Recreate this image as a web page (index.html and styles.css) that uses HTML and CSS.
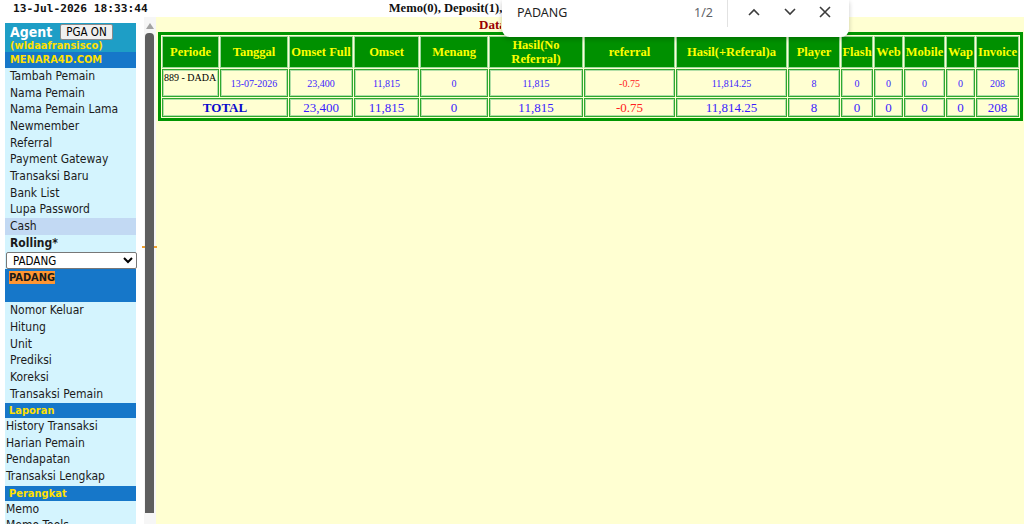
FILE: index.html
```html
<!DOCTYPE html>
<html lang="en">
<head>
    <meta charset="UTF-8">
    <meta name="viewport" content="width=device-width, initial-scale=1.0">
    <title>Agent - Rolling</title>
    <link rel="stylesheet" href="styles.css">
</head>
<body>
    <div class="topbar">
        <span class="clock">13-Jul-2026 18:33:44</span>
        <span class="memo">Memo(0), Deposit(1), Withdraw(0)</span>
    </div>

    <div class="frames">
        <div class="left-frame">
            <div class="menu">
                <div class="agent">
                    <div class="agent-row">
                        <span class="agent-title">Agent</span>
                        <button class="pga">PGA ON</button>
                    </div>
                    <div class="agent-user">(wldaafransisco)</div>
                </div>
                <div class="section site">MENARA4D.COM</div>
                <a class="item">Tambah Pemain</a>
                <a class="item">Nama Pemain</a>
                <a class="item">Nama Pemain Lama</a>
                <a class="item">Newmember</a>
                <a class="item">Referral</a>
                <a class="item">Payment Gateway</a>
                <a class="item">Transaksi Baru</a>
                <a class="item">Bank List</a>
                <a class="item">Lupa Password</a>
                <a class="item active">Cash</a>
                <div class="item bold">Rolling*</div>
                <select class="market">
                    <option>PADANG</option>
                </select>
                <div class="picked"><span class="match">PADANG</span></div>
                <a class="item">Nomor Keluar</a>
                <a class="item">Hitung</a>
                <a class="item">Unit</a>
                <a class="item">Prediksi</a>
                <a class="item">Koreksi</a>
                <a class="item">Transaksi Pemain</a>
                <div class="section">Laporan</div>
                <a class="item plain">History Transaksi</a>
                <a class="item plain">Harian Pemain</a>
                <a class="item plain">Pendapatan</a>
                <a class="item plain">Transaksi Lengkap</a>
                <div class="section">Perangkat</div>
                <a class="item plain">Memo</a>
                <a class="item plain">Memo Tools</a>
            </div>
            <div class="scrollbar">
                <div class="arrow"></div>
                <div class="tick"></div>
                <div class="thumb"></div>
            </div>
        </div>

        <div class="right-frame">
            <div class="caption"><span class="caption-text">Data Rolling PADANG</span></div>
            <table class="report">
                <colgroup>
                    <col class="w57"><col class="w68"><col class="w64"><col class="w65"><col class="w68">
                    <col class="w94"><col class="w91"><col class="w111"><col class="w52"><col class="w32">
                    <col class="w29"><col class="w41"><col class="w29"><col class="w43">
                </colgroup>
                <tr class="head">
                    <th>Periode</th>
                    <th>Tanggal</th>
                    <th>Omset Full</th>
                    <th>Omset</th>
                    <th>Menang</th>
                    <th>Hasil(No<br>Referral)</th>
                    <th>referral</th>
                    <th>Hasil(+Referal)a</th>
                    <th>Player</th>
                    <th>Flash</th>
                    <th>Web</th>
                    <th>Mobile</th>
                    <th>Wap</th>
                    <th>Invoice</th>
                </tr>
                <tr class="data">
                    <td class="periode">889 - DADA</td>
                    <td>13-07-2026</td>
                    <td>23,400</td>
                    <td>11,815</td>
                    <td>0</td>
                    <td>11,815</td>
                    <td class="neg">-0.75</td>
                    <td>11,814.25</td>
                    <td>8</td>
                    <td>0</td>
                    <td>0</td>
                    <td>0</td>
                    <td>0</td>
                    <td>208</td>
                </tr>
                <tr class="total">
                    <td colspan="2" class="total-label">TOTAL</td>
                    <td>23,400</td>
                    <td>11,815</td>
                    <td>0</td>
                    <td>11,815</td>
                    <td class="neg">-0.75</td>
                    <td>11,814.25</td>
                    <td>8</td>
                    <td>0</td>
                    <td>0</td>
                    <td>0</td>
                    <td>0</td>
                    <td>208</td>
                </tr>
            </table>
        </div>
    </div>

    <div class="findbar">
        <div class="find-row">
            <span class="query">PADANG</span>
            <span class="count">1/2</span>
            <span class="divider"></span>
            <svg class="ico up" width="12" height="8" viewBox="0 0 12 8"><polyline points="1,7 6,2 11,7" fill="none" stroke="#3c3c3c" stroke-width="1.6"/></svg>
            <svg class="ico down" width="12" height="8" viewBox="0 0 12 8"><polyline points="1,1 6,6 11,1" fill="none" stroke="#3c3c3c" stroke-width="1.6"/></svg>
            <svg class="ico close" width="12" height="12" viewBox="0 0 12 12"><path d="M1 1 L11 11 M11 1 L1 11" stroke="#3c3c3c" stroke-width="1.6"/></svg>
        </div>
    </div>
</body>
</html>
```

FILE: styles.css
```css
body {
    margin: 0;
    width: 1024px;
    height: 524px;
    overflow: hidden;
    position: relative;
    background: #fff;
    font-family: "DejaVu Sans", Verdana, sans-serif;
}
.topbar {
    height: 17px;
    display: flex;
    align-items: center;
    white-space: nowrap;
    overflow: hidden;
}
.clock {
    margin-left: 13px;
    font: bold 11.2px "DejaVu Sans Mono", monospace;
    color: #111;
}
/* the rest of this line sits under the find bar */
.memo {
    margin-left: 241px;
    width: 113px;
    overflow: hidden;
    font: bold 12.6px "Liberation Serif", serif;
    color: #111;
}
.frames {
    display: flex;
    height: 507px;
    overflow: hidden;
}
.left-frame {
    width: 156px;
    flex-shrink: 0;
    display: flex;
    background: #fff;
}
.menu {
    width: 131px;
    margin: 6px 8px 0 5px;
    background: #d4f4fe;
    font-size: 12px;
    font-stretch: condensed;
}
.agent {
    background: #1e9ec6;
    height: 29px;
}
.agent-row {
    height: 17px;
    display: flex;
    align-items: center;
}
.agent-title {
    margin-left: 5px;
    width: 50px;
    font-weight: bold;
    font-size: 14px;
    color: #fff;
}
.pga {
    width: 53px;
    height: 16px;
    margin-top: 1px;
    padding: 0;
    font: 11.5px "DejaVu Sans", sans-serif;
    font-stretch: condensed;
    color: #000;
    background: #f0f0f0;
    border: 1px solid #8a8a8a;
    border-radius: 2px;
}
.agent-user {
    height: 12px;
    line-height: 12px;
    padding-left: 5px;
    font-size: 11px;
    font-weight: bold;
    color: #ffe000;
}
.section {
    height: 16px;
    line-height: 16px;
    padding-left: 4px;
    background: #1677c9;
    color: #ffe000;
    font-size: 11px;
    font-weight: bold;
    border-top: 1px solid #d4f4fe;
    box-sizing: border-box;
}
.section.site {
    border-top: none;
    padding-left: 5px;
}
.item {
    display: block;
    height: 16.67px;
    line-height: 16.67px;
    padding-left: 5px;
    color: #1b1b1b;
    white-space: nowrap;
}
.item.plain {
    padding-left: 1px;
}
.item.active {
    background: #c2d9f3;
}
.item.bold {
    font-weight: bold;
}
.market {
    display: block;
    width: 131px;
    height: 17px;
    margin: 1px 0 0 1px;
    padding: 0 2px;
    font: 11.5px "DejaVu Sans", sans-serif;
    font-stretch: condensed;
    color: #000;
    background: #fff;
    border: 1px solid #777;
    border-radius: 2px;
}
.picked {
    height: 33px;
    padding: 1px 0 0 4px;
    box-sizing: border-box;
    background: #1677c9;
}
.match {
    background: #ff9632;
    color: #1a1a1a;
    font-size: 11px;
    font-weight: bold;
}
.scrollbar {
    width: 12px;
    position: relative;
    background: #f6f6f6;
}
.arrow {
    width: 0;
    height: 0;
    margin: 6px auto 0;
    border-left: 4px solid transparent;
    border-right: 4px solid transparent;
    border-bottom: 6px solid #a3a3a3;
}
.tick {
    position: absolute;
    left: -2px;
    top: 229px;
    width: 15px;
    height: 2px;
    background: #f0a030;
}
.thumb {
    position: relative;
    width: 9px;
    height: 480px;
    margin: 4px 0 0 1px;
    background: #5e5e5e;
    border-radius: 4px 4px 0 0;
}
.right-frame {
    flex: 1;
    background: #ffffd2;
    padding-left: 2px;
}
.caption {
    height: 15px;
    line-height: 14px;
    padding-left: 321px;
    font: bold 13px "Liberation Serif", serif;
    color: #990000;
    white-space: nowrap;
}
.caption-text {
    display: inline-block;
    width: 22px;
    overflow: hidden;
    vertical-align: top;
}
.report {
    width: 865px;
    table-layout: fixed;
    border: 3px solid #009600;
    border-spacing: 1px;
    font-family: "Liberation Serif", serif;
}
.w57 { width: 57px; }
.w68 { width: 68px; }
.w64 { width: 64px; }
.w65 { width: 65px; }
.w94 { width: 94px; }
.w91 { width: 91px; }
.w111 { width: 111px; }
.w52 { width: 52px; }
.w32 { width: 32px; }
.w29 { width: 29px; }
.w41 { width: 41px; }
.w43 { width: 43px; }
.report th {
    height: 32px;
    padding: 0;
    background: #009000;
    color: #ffff00;
    font-size: 12.5px;
    font-weight: bold;
    line-height: 14px;
    white-space: nowrap;
    overflow: hidden;
    border: 1px solid #9ad89a;
    box-sizing: border-box;
}
.report td {
    padding: 1px;
    text-align: center;
    color: #3a1cff;
    font-size: 10px;
    border: 1px solid #2fa82f;
    box-shadow: inset 0 0 0 1px #b2dfa8;
    white-space: nowrap;
    overflow: hidden;
}
.data td {
    height: 28px;
    box-sizing: border-box;
}
.data td.periode {
    vertical-align: top;
    text-align: left;
    color: #000;
    padding: 2px 0 0 1px;
}
.total td {
    height: 19px;
    box-sizing: border-box;
    padding: 0;
    font-size: 13px;
}
.total td.total-label {
    font-weight: bold;
    color: #0a0acc;
}
.report td.neg {
    color: #ff2020;
}
.findbar {
    position: absolute;
    top: 0;
    left: 502px;
    width: 347px;
    height: 37px;
    background: #fff;
    border-radius: 0 0 8px 8px;
    box-shadow: 0 2px 5px rgba(0, 0, 0, 0.22);
}
.find-row {
    height: 24px;
    display: flex;
    align-items: center;
    font-family: "Noto Sans", "Open Sans", sans-serif;
    font-size: 12.5px;
}
.query {
    width: 177px;
    padding-left: 15px;
    color: #1f1f1f;
}
.count {
    width: 33px;
    color: #5f6368;
}
.divider {
    align-self: flex-start;
    width: 1px;
    height: 27px;
    background: #e2e2e2;
}
.ico.up {
    margin-left: 20px;
}
.ico.down {
    margin-left: 24px;
}
.ico.close {
    margin-left: 23px;
}
```
